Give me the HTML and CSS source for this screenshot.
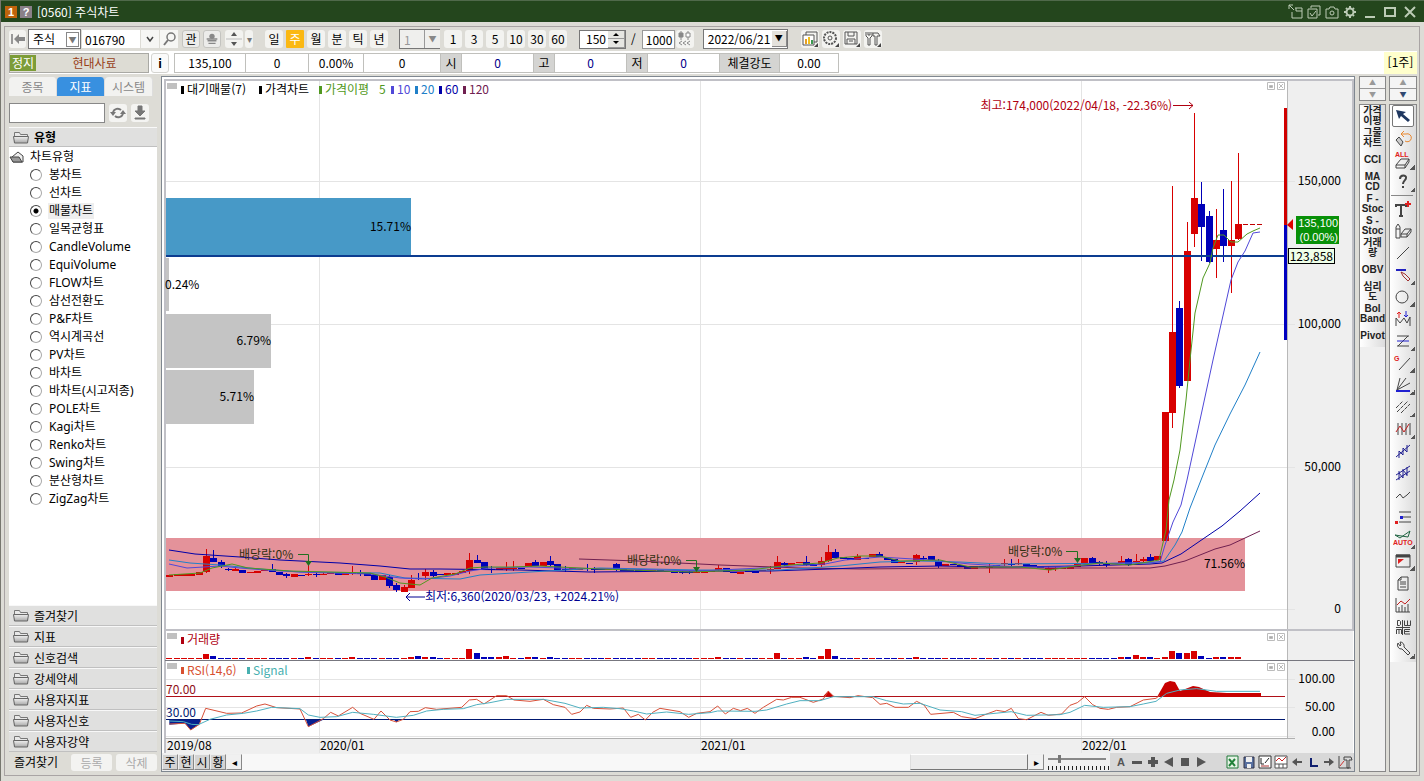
FILE: index.html
```html
<!DOCTYPE html>
<html lang="ko">
<head>
<meta charset="utf-8">
<title>[0560] 주식차트</title>
<link rel="stylesheet" href="styles.css">
</head>
<body>
<div class="window">
  <header class="titlebar">
    <span class="badge badge-num">1</span><span class="badge badge-help">?</span>
    <h1>[0560] 주식차트</h1>
    <div class="title-actions">
      <button aria-label="창 분리"><svg viewBox="0 0 16 16"><path d="M1 5V1h4M1 1l5 5M7 4h7v10H4V8M8 4v3h6"/></svg></button>
      <button aria-label="창 선택"><svg viewBox="0 0 16 16"><path d="M5 4V2h9v9h-2M2 5h9v9H2zM4 9l2 3 4-5"/></svg></button>
      <button aria-label="화면 캡처"><svg viewBox="0 0 16 16"><path d="M2 5h3l1-2h4l1 2h3v9H2z"/><circle cx="8" cy="9" r="2"/></svg></button>
      <button aria-label="설정"><svg viewBox="0 0 16 16"><circle cx="8" cy="8" r="3.5" stroke-width="2"/><path d="M8 2v2M8 12v2M2 8h2M12 8h2M4 4l1 1M11 11l1 1M12 4l-1 1M4 12l1-1" stroke-width="2"/></svg></button>
      <button class="win" aria-label="최소화"><svg viewBox="0 0 16 16"><path d="M3 13h10" stroke-width="2"/></svg></button>
      <button class="win" aria-label="최대화"><svg viewBox="0 0 16 16"><path d="M3 4h10v8H3z" stroke-width="2"/></svg></button>
      <button class="win" aria-label="닫기"><svg viewBox="0 0 16 16"><path d="M3 3l10 10M13 3L3 13" stroke-width="2"/></svg></button>
    </div>
  </header>

  <div class="frame">
    <div class="toolbar">
      <button class="tb narrow" aria-label="처음"><svg viewBox="0 0 18 18"><path d="M3 4v10" stroke="#999" stroke-width="2" fill="none"/><path d="M5 9l5-5v3h6v4h-6v3z" fill="#888"/></svg></button>
      <span class="combo kind"><select aria-label="종목 구분"><option>주식</option></select><i class="boxed">▼</i></span>
      <span class="code"><input aria-label="종목코드" value="016790"><button aria-label="종목 목록"><svg viewBox="0 0 18 18"><path d="M6 7l3 4 3-4" fill="none" stroke="#444" stroke-width="1.5"/></svg></button><button aria-label="종목 검색"><svg viewBox="0 0 18 18"><circle cx="11" cy="7" r="4" fill="none" stroke="#777" stroke-width="1.5"/><path d="M8 10l-4 5" stroke="#777" stroke-width="2"/></svg></button></span>
      <button class="tb gray">관</button>
      <button class="tb gray" aria-label="관심 저장"><svg viewBox="0 0 18 18"><circle cx="9" cy="6" r="3" fill="#888"/><path d="M3 9h12M4 11h10M5 14h8" stroke="#888" stroke-width="1.5"/></svg></button>
      <button class="tb" aria-label="순서 이동"><svg viewBox="0 0 18 18"><path d="M6 6l3-4 3 4zM6 12l3 4 3-4z" fill="#555"/><path d="M1 9h16" stroke="#bbb"/></svg></button>
      <button class="tb tiny" aria-label="더보기">▾</button>
      <div class="group periods">
        <button class="tb">일</button><button class="tb active">주</button><button class="tb">월</button><button class="tb">분</button><button class="tb">틱</button><button class="tb">년</button>
      </div>
      <span class="combo minute"><input aria-label="분 단위" value="1" disabled><i class="soft">▼</i></span>
      <div class="group minutes">
        <button class="tb">1</button><button class="tb">3</button><button class="tb">5</button><button class="tb">10</button><button class="tb">30</button><button class="tb">60</button>
      </div>
      <span class="spin"><input aria-label="표시 개수" value="150"><span class="arrows"><button aria-label="늘리기"><svg viewBox="0 0 8 4"><path d="M1 4l3-3 3 3z"/></svg></button><button aria-label="줄이기"><svg viewBox="0 0 8 4"><path d="M1 0l3 3 3-3z"/></svg></button></span></span>
      <span class="slash">/</span>
      <input class="total" aria-label="전체 개수" value="1000">
      <button class="tb" aria-label="과거 데이터"><svg viewBox="0 0 18 18" fill="none" stroke="#888"><path d="M5 1v9M12 1v9"/><path d="M3 3h4v4H3z" fill="#888"/><path d="M10 3h4v4h-4z" fill="#fff"/><path d="M6 11l-3 2 3 2M10 11l-3 2 3 2M14 11l-3 2 3 2"/></svg></button>
      <span class="combo date"><select aria-label="기준일"><option>2022/06/21</option></select><i class="raised">▼</i></span>
      <div class="group tools">
        <button class="tb" aria-label="차트 종류"><svg viewBox="0 0 18 18" fill="none" stroke="#555"><path d="M5 5V2h11v10h-3"/><path d="M2 5h11v10H2z" fill="#fff"/><path d="M5 9v5" stroke="#e8a020" stroke-width="2"/><path d="M8 7v7" stroke="#f0c020" stroke-width="2"/><path d="M11 10v4" stroke="#3a9a50" stroke-width="2"/><path d="M17 13v4h-4z" fill="#444" stroke="none"/></svg></button>
        <button class="tb" aria-label="환경 설정"><svg viewBox="0 0 18 18" fill="none" stroke="#555"><circle cx="8" cy="8" r="6" stroke-dasharray="2 1" stroke-width="2"/><circle cx="8" cy="8" r="2"/><path d="M17 13v4h-4z" fill="#444" stroke="none"/></svg></button>
        <button class="tb" aria-label="저장"><svg viewBox="0 0 18 18" fill="none" stroke="#555"><path d="M2 2h12v12H2zM5 2v4h6V2M4 14V9h8v5M6 11h4"/><path d="M17 13v4h-4z" fill="#444" stroke="none"/></svg></button>
        <button class="tb" aria-label="도구"><svg viewBox="0 0 18 18" fill="none" stroke="#555"><path d="M2 2v4l2 2v7h2V8l2-2V2M4 2v3h2V2M9 3h5l2 3h-3v9h-2V6H9z"/><path d="M17 13v4h-4z" fill="#444" stroke="none"/></svg></button>
      </div>
    </div>

    <div class="quote">
      <div class="name"><b>정지</b><span>현대사료</span></div>
      <button class="info">i</button>
      <div class="cells">
        <span class="c71">135,100</span><span class="c62">0</span><span class="c54">0.00%</span><span class="c77">0</span><em>시</em><span class="c72 navy">0</span><em>고</em><span class="c72 navy">0</span><em>저</em><span class="c72 navy">0</span><em class="wide">체결강도</em><span class="c58">0.00</span>
      </div>
      <span class="week">[1주]</span>
    </div>

    <main class="main">
      <aside class="sidebar">
        <nav class="tabs"><button>종목</button><button class="on">지표</button><button>시스템</button></nav>
        <div class="search">
          <input aria-label="지표 검색">
          <button aria-label="새로고침"><svg viewBox="0 0 18 18"><path d="M4 8a5 5 0 0 1 8-2M14 10a5 5 0 0 1-8 2" fill="none" stroke="#777" stroke-width="2"/><path d="M1 8h6l-3 4zM11 10h6l-3-4z" fill="#777"/></svg></button>
          <button aria-label="내려받기"><svg viewBox="0 0 18 18"><path d="M7 2h4v5h3l-5 5-5-5h3zM4 14h10v1H4z" fill="#777" stroke="#777"/></svg></button>
        </div>
        <h2 class="section head"><svg class="folder" viewBox="0 0 16 13"><use href="#fd"/></svg>유형</h2>
        <div class="tree">
          <p class="root"><svg class="folder" viewBox="0 0 16 13"><path d="M3 6l6-5 5 4v6H4z" fill="#eee" stroke="#444"/><path d="M1 6h9l3 5H4z" fill="#999" stroke="#444"/></svg>차트유형</p>
          <label><input type="radio" name="t"><span>봉차트</span></label>
          <label><input type="radio" name="t"><span>선차트</span></label>
          <label><input type="radio" name="t" checked><span>매물차트</span></label>
          <label><input type="radio" name="t"><span>일목균형표</span></label>
          <label><input type="radio" name="t"><span>CandleVolume</span></label>
          <label><input type="radio" name="t"><span>EquiVolume</span></label>
          <label><input type="radio" name="t"><span>FLOW차트</span></label>
          <label><input type="radio" name="t"><span>삼선전환도</span></label>
          <label><input type="radio" name="t"><span>P&amp;F차트</span></label>
          <label><input type="radio" name="t"><span>역시계곡선</span></label>
          <label><input type="radio" name="t"><span>PV차트</span></label>
          <label><input type="radio" name="t"><span>바차트</span></label>
          <label><input type="radio" name="t"><span>바차트(시고저종)</span></label>
          <label><input type="radio" name="t"><span>POLE차트</span></label>
          <label><input type="radio" name="t"><span>Kagi차트</span></label>
          <label><input type="radio" name="t"><span>Renko차트</span></label>
          <label><input type="radio" name="t"><span>Swing차트</span></label>
          <label><input type="radio" name="t"><span>분산형차트</span></label>
          <label><input type="radio" name="t"><span>ZigZag차트</span></label>
        </div>
        <button class="section"><svg class="folder" viewBox="0 0 16 13"><use href="#fd"/></svg>즐겨찾기</button>
        <button class="section"><svg class="folder" viewBox="0 0 16 13"><use href="#fd"/></svg>지표</button>
        <button class="section"><svg class="folder" viewBox="0 0 16 13"><use href="#fd"/></svg>신호검색</button>
        <button class="section"><svg class="folder" viewBox="0 0 16 13"><use href="#fd"/></svg>강세약세</button>
        <button class="section"><svg class="folder" viewBox="0 0 16 13"><use href="#fd"/></svg>사용자지표</button>
        <button class="section"><svg class="folder" viewBox="0 0 16 13"><use href="#fd"/></svg>사용자신호</button>
        <button class="section"><svg class="folder" viewBox="0 0 16 13"><use href="#fd"/></svg>사용자강약</button>
        <div class="fav"><span>즐겨찾기</span><button disabled>등록</button><button disabled>삭제</button></div>
      </aside>

      <section class="chart">
        <svg class="plot" viewBox="162 77 1192 676" preserveAspectRatio="xMinYMin meet" role="img" aria-label="현대사료 주봉 차트">
          <defs>
            <linearGradient id="fg" x2="0" y2="1"><stop offset="0" stop-color="#f0f0f0"/><stop offset="1" stop-color="#a8a8a8"/></linearGradient>
            <g id="fd"><path d="M1.500 11V1.500h5l1 2h7V11z" fill="#e8e8e8" stroke="#777"/><path d="M.5 5.500h15l-1 6.500h-13z" fill="url(#fg)" stroke="#666"/></g>
            <g id="paneBtns" fill="none" stroke="#bbb"><path d="M.5.5h7v7h-7zM10.500.5h7v7h-7zM12 2l4 4M16 2l-4 4"/><path d="M2.500 3.500h3v2h-3z" fill="#aaa"/></g>
          </defs>
          <rect x="162" y="77" width="1192" height="676" fill="#fff"/>
          <path d="M1287 81h66v672h-66zM165 739h1188v14H165z" fill="#efefef"/>
          <g class="crisp" fill="none">
            <path d="M166 181.500h1129M166 324.500h1129M166 467.500h1129M166 609.500h1129M166 679.500h1129M166 707.500h1129M166 736.500h1129M319.500 81v672M700.500 81v672M1081.500 81v672" stroke="#e4e4e4"/>
            <path d="M1287.500 81v658" stroke="#b8b8b8"/>
            <path d="M165 753V80h1188v550H165" stroke="#c0c0c6" stroke-width="2"/>
            <path d="M165 660.500h1189" stroke="#77777f"/>
            <path d="M165 738.500h1130" stroke="#b0b0b0"/>
          </g>

          <rect x="166" y="198" width="245" height="57" fill="#4799c7"/>
          <path d="M166 258h3v53h-3zM166 314h105v54H166zM166 370h88v54h-88z" fill="#c4c4c4"/>
          <rect x="166" y="538" width="1079" height="53" fill="#e4929a"/>

          <g id="candles" class="crisp"></g>
          <rect x="166" y="255" width="1121" height="2" fill="#0c3c90"/>

          <g class="line">
            <polyline stroke="#702050" points="579,559 638,561 720,565 800,568 860,569 960,568 1000,568 1150,568 1165,566 1185,561 1215,549 1230,545 1245,538 1260,531"/>
            <polyline stroke="#0000a8" points="169,550 195,554 240,557 280,560 340,563 380,566 410,569 440,569 520,570 590,572 700,571 770,571 830,569 880,567 940,566 1000,567 1080,566 1150,564 1162,563 1181,554 1200,541 1222,526 1240,511 1260,493"/>
            <polyline stroke="#2080c8" points="169,560 190,563 220,565 260,569 300,572 380,573 405,578 460,579 480,575 530,572 600,568 700,570 780,570 840,566 880,562 920,561 960,562 1000,564 1150,563 1164,561 1175,545 1182,532 1190,508 1203,475 1215,445 1230,414 1245,385 1260,352"/>
            <polyline stroke="#5048d8" points="169,564 187,568 220,566 240,568 265,570 300,572 330,573 370,574 400,578 425,579 450,576 470,571 490,568 530,567 560,568 620,569 700,571 780,567 825,564 845,560 880,557 930,560 970,564 1020,567 1060,567 1090,564 1160,562 1165,545 1173,522 1181,505 1187,480 1200,420 1213,360 1231,280 1238,262 1245,251 1253,233 1260,232"/>
            <polyline stroke="#509820" points="169,575 200,573 212,568 232,564 248,568 290,571 330,572 370,573 385,577 400,583 420,585 432,578 455,574 470,568 485,567 510,567 540,566 560,567 600,569 690,572 750,570 790,565 820,563 838,558 860,556 880,556 900,561 940,560 970,567 1020,567 1050,570 1075,566 1100,563 1130,565 1159,560 1166,530 1169,500 1174,480 1180,450 1186,400 1190,360 1195,313 1203,278 1210,263 1213,248 1218,235 1224,235 1231,242 1238,242 1247,234 1253,231 1260,228"/>
            <path stroke="#c00000" stroke-dasharray="5 2" d="M1243 224.500h21"/>
          </g>

          <path d="M1284 108h3v117h-3z" fill="#d00000"/><path d="M1284 225h3v115h-3z" fill="#0000c0"/>
          <path d="M1293 219v11l-6-5z" fill="#e00000"/>
          <g class="line">
            <path stroke="#b00010" d="M1173 105.500h20M1189 102l4 3.500-4 3.500"/>
            <path stroke="#000090" d="M425 597h-19M410 593l-4 4 4 4"/>
            <path stroke="#207020" d="M298 554.500h10.500V565M686 560.500h10.500V570M1066 551.500h11.500V562"/>
          </g>
          <path d="M305 561h7l-3.500 5zM693 567h7l-3.500 5zM1074 558h7l-3.500 5z" fill="#207020"/>

          <g id="volume" class="crisp"></g>

          <g class="crisp"><path d="M166 696.500h1119" stroke="#b01018"/><path d="M166 719.500h1119" stroke="#001870"/></g>
          <g transform="translate(160 530) scale(.33333)">
            <path fill="#082090" d="M28 569v15l27-2 20-2 17 20 26-17 4-14zM438 569l7 21 45-21zM702 569l7 8 9-8z"/>
            <path fill="#c80000" d="M1990 499l15-17 17 17z"/>
          </g>
          <path fill="#c80000" d="M1157 697l8-14 5-2 5 1 5 9 13-5 6 1 11 5 17 1h34v4z"/>
          <g class="line" transform="translate(160 530) scale(.33333)">
            <polyline stroke="#d85038" points="28,582 75,580 92,600 118,583 137,535 200,550 245,549 290,528 315,522 350,533 420,537 445,590 490,566 512,547 535,558 578,532 600,550 642,568 663,543 690,570 709,576 730,568 750,545 775,544 796,533 830,538 905,532 928,510 950,508 972,522 1010,497 1040,497 1062,510 1110,514 1150,508 1180,524 1215,532 1235,553 1260,546 1280,526 1300,535 1350,537 1390,534 1412,562 1435,553 1456,570 1478,547 1500,535 1560,545 1586,562 1610,550 1650,545 1673,528 1696,552 1720,535 1742,542 1762,535 1785,550 1810,532 1850,508 1870,510 1895,502 1920,502 1960,517 1990,507 2005,484 2020,499 2070,503 2094,497 2138,503 2160,523 2180,520 2205,532 2245,532 2270,514 2292,525 2312,553 2380,547 2405,560 2445,566 2475,554 2510,541 2535,545 2554,535 2575,566 2600,569 2643,547 2665,556 2705,552 2730,526 2752,518 2774,500 2798,524 2820,535 2845,538 2870,532 2910,530 2950,510 2988,505 3000,495"/>
            <polyline stroke="#50b0c0" points="28,573 70,575 95,583 115,584 150,568 200,555 250,550 290,543 335,532 420,536 445,555 480,562 530,560 578,547 640,553 709,562 760,556 800,543 850,538 910,536 950,524 990,518 1040,508 1150,508 1215,520 1260,534 1330,532 1380,536 1420,543 1460,552 1520,546 1586,553 1650,548 1673,543 1785,544 1820,540 1880,522 1920,512 1980,512 2020,500 2138,500 2180,512 2230,522 2280,520 2340,540 2405,545 2445,556 2554,545 2600,556 2700,554 2730,547 2774,526 2830,532 2910,530 2950,522 2988,514 3020,490 3060,480 3110,476 3170,484 3300,484"/>
          </g>

          <g fill="#c0c0c0"><path d="M167 83h10v6h-10zM167 633h10v6h-10zM167 663h10v6h-10z"/></g>
          <use href="#paneBtns" x="1267" y="82"/><use href="#paneBtns" x="1267" y="633"/><use href="#paneBtns" x="1267" y="663"/>

          <g class="txt">
            <path d="M181 86h3v8h-3zM259 86h3v8h-3z" fill="#000"/><path d="M319 86h3v8h-3z" fill="#509820"/><path d="M391 86h3v8h-3z" fill="#5048d8"/><path d="M415 86h3v8h-3z" fill="#2080c8"/><path d="M439 86h3v8h-3z" fill="#0000a8"/><path d="M463 86h3v8h-3z" fill="#702050"/>
            <text x="187" y="94">대기매물(7)</text><text x="265" y="94">가격차트</text><text x="325" y="94" fill="#509820">가격이평</text><text x="379" y="94" fill="#509820">5</text><text x="397" y="94" fill="#5048d8">10</text><text x="421" y="94" fill="#2080c8">20</text><text x="445" y="94" fill="#0000a8">60</text><text x="469" y="94" fill="#702050">120</text>
            <text x="1172" y="110" text-anchor="end" fill="#b00010">최고:174,000(2022/04/18, -22.36%)</text>
            <text x="425" y="601" fill="#000090">최저:6,360(2020/03/23, +2024.21%)</text>
            <text x="239" y="559" fill="#303010">배당락:0%</text><text x="627" y="565" fill="#303010">배당락:0%</text><text x="1008" y="556" fill="#303010">배당락:0%</text>
            <text x="165" y="289">0.24%</text>
            <g text-anchor="end"><text x="411" y="231">15.71%</text><text x="271" y="345">6.79%</text><text x="254" y="401">5.71%</text><text x="1245" y="568">71.56%</text>
            <text x="1341" y="185">150,000</text><text x="1341" y="328">100,000</text><text x="1341" y="471">50,000</text><text x="1341" y="613">0</text><text x="1335" y="683">100.00</text><text x="1335" y="711">50.00</text><text x="1335" y="736">0.00</text></g>
            <rect x="1296" y="216" width="43" height="28" fill="#089008"/>
            <g class="price" text-anchor="end" fill="#fff"><text x="1338" y="227">135,100</text><text x="1338" y="241">(0.00%)</text></g>
            <rect x="1288.500" y="248.500" width="46" height="15" fill="#efffe8" stroke="#000"/><text x="1333" y="261" text-anchor="end">123,858</text>
            <path d="M181 637h3v7h-3z" fill="#b00010"/><text x="187" y="644" fill="#b00010">거래량</text>
            <path d="M181 667h3v7h-3z" fill="#d85030"/><text x="187" y="675" fill="#d85030">RSI(14,6)</text>
            <path d="M247 667h3v7h-3z" fill="#48b0b0"/><text x="253" y="675" fill="#48b0b0">Signal</text>
            <text x="166" y="694" fill="#901018">70.00</text><text x="166" y="717" fill="#001870">30.00</text>
            <text x="167" y="750">2019/08</text><text x="320" y="750">2020/01</text><text x="701" y="750">2021/01</text><text x="1082" y="750">2022/01</text>
          </g>
        </svg>

        <div class="chartbar">
          <button class="mini">주</button><button class="mini">현</button><button class="mini">시</button><button class="mini">황</button><button class="mini arrow" aria-label="왼쪽으로">◂</button>
          <div class="track"><span class="thumb"></span></div>
          <button class="mini arrow" aria-label="오른쪽으로">▸</button>
          <div class="zoomer"><input type="range" aria-label="확대 비율" value="18"></div>
          <div class="play">
            <button>A</button>
            <button aria-label="축소"><svg viewBox="0 0 16 16"><path d="M3 7h10v3H3z"/></svg></button>
            <button aria-label="확대"><svg viewBox="0 0 16 16"><path d="M3 6h3V3h4v3h3v4h-3v3H6v-3H3z"/></svg></button>
            <button aria-label="뒤로"><svg viewBox="0 0 16 16"><path d="M12 3v10L3 8z"/></svg></button>
            <button aria-label="정지"><svg viewBox="0 0 16 16"><path d="M4 4h8v8H4z"/></svg></button>
            <button aria-label="재생"><svg viewBox="0 0 16 16"><path d="M4 3v10l9-5z"/></svg></button>
          </div>
          <div class="files">
            <button aria-label="엑셀"><svg viewBox="0 0 16 16"><path d="M2 2h11v12H2z" fill="#e8f4e8" stroke="#207838"/><path d="M4 5l6 7M10 5l-6 7" stroke="#208038" stroke-width="2"/></svg></button>
            <button aria-label="저장"><svg viewBox="0 0 16 16"><path d="M3 3h10v11H3z" fill="#5870a0" stroke="#334"/><path d="M5 3h6v5H5zM6 10h4v4H6z" fill="#eee"/></svg></button>
            <button aria-label="차트 전환"><svg viewBox="0 0 16 16"><path d="M2 2h12v12H2z" fill="#fff" stroke="#333"/><path d="M4 4v6h3M8 9l4-5" fill="none" stroke="#222"/><path d="M4 12h8" stroke="#a33"/></svg></button>
            <button aria-label="보조 차트"><svg viewBox="0 0 16 16"><path d="M2 2h12v12H2zM2 10h12M6 10v4M10 10v4" fill="#fff" stroke="#555"/><path d="M3 7l3-3 3 3 4-4" fill="none" stroke="#c22"/></svg></button>
            <button aria-label="이전"><svg viewBox="0 0 16 16"><path d="M3 8l5-4v3h5v2H8v3z"/></svg></button>
            <button aria-label="로그"><svg viewBox="0 0 16 16"><path d="M5 4h2v7h6v2H5z" fill="#102070"/></svg></button>
            <button aria-label="다음"><svg viewBox="0 0 16 16"><path d="M13 8L8 4v3H3v2h5v3z"/></svg></button>
            <button aria-label="차트 도구"><svg viewBox="0 0 16 16" fill="none" stroke="#444"><path d="M2 2v12h12M7 3h7l1 3h-3v8h-2V6H7z"/><path d="M3 12l4-5" stroke="#c33"/></svg></button>
          </div>
        </div>
      </section>

      <div class="rail">
        <div class="updown"><button aria-label="위로">▲</button><button aria-label="아래로">▼</button></div>
        <div class="rail-box"><div class="rail-items">
          <button>가격<br>이평</button><button>그물<br>차트</button><button>CCI</button><button>MA<br>CD</button><button>F -<br>Stoc</button><button>S -<br>Stoc</button><button>거래<br>량</button><button>OBV</button><button>심리<br>도</button><button>Bol<br>Band</button><button>Pivot</button>
        </div></div>
      </div>

      <div class="rail draw">
        <div class="updown"><button aria-label="위로">▲</button><button class="dark" aria-label="아래로">▼</button></div>
        <div class="rail-box"><div class="rail-items">
          <button class="picked" aria-label="선택"><svg viewBox="0 0 20 20"><path d="M3 4l10 2-3 2 7 6-2 2-7-6-2 3z" fill="#203860" stroke="none"/></svg></button>
          <button aria-label="되돌리기"><svg viewBox="0 0 20 20"><path d="M8 6l3-3M8 6l3 3M8 6h5a4 4 0 1 1-1 7" stroke="#e88830"/><path d="M3 12l3-3 4 5-2 4z" fill="#ccc"/></svg></button>
          <button class="more" aria-label="모두 지우기"><svg viewBox="0 0 20 20"><text x="2" y="7">ALL</text><path d="M3 15l5-6h8l-4 6zM3 15v3h9v-3M12 18l4-6V9"/></svg></button>
          <button class="more" aria-label="도움말"><svg viewBox="0 0 20 20"><path d="M7 7c0-5 7-4 6-1 0 2-3 3-3 6M10 14v2" stroke-width="2"/></svg></button>
          <hr>
          <button aria-label="글자"><svg viewBox="0 0 20 20"><path d="M3 8V6h10v2M8 6v11M6 17h4" stroke-width="2"/><path d="M15 2v6M12 5h6" stroke="#e02020" stroke-width="2"/></svg></button>
          <button aria-label="연필과 지우개"><svg viewBox="0 0 20 20"><path d="M3 6l2-3 2 3v11H3zM3 8h4M8 13l4-5h6l-4 5zM8 13v3h6v-3M14 16l4-5V8"/></svg></button>
          <button aria-label="직선"><svg viewBox="0 0 20 20"><path d="M4 16L16 4"/></svg></button>
          <button class="more" aria-label="수평선"><svg viewBox="0 0 20 20"><path d="M3 5h10" stroke="#2020c0" stroke-width="2"/><path d="M8 7l2 4 5 5 2-2-5-5z" stroke="#a03030"/></svg></button>
          <button class="more" aria-label="원"><svg viewBox="0 0 20 20"><circle cx="9" cy="10" r="6"/></svg></button>
          <button aria-label="고저점"><svg viewBox="0 0 20 20"><path d="M3 17V9l4 5 4-5 3 5 3-6v9"/><path d="M6 9V3M4 5l2-2 2 2" stroke="#e02020"/><path d="M13 2v6M11 6l2 2 2-2" stroke="#2020d0"/></svg></button>
          <button class="more" aria-label="되돌림"><svg viewBox="0 0 20 20"><path d="M4 5h12M4 15h12M15 5L5 15"/><path d="M4 10h12" stroke="#2020d0"/></svg></button>
          <button class="more" aria-label="각도선"><svg viewBox="0 0 20 20"><text x="1" y="8">G</text><path d="M6 17L17 5"/></svg></button>
          <button class="more" aria-label="부채꼴"><svg viewBox="0 0 20 20"><path d="M4 15L7 3M4 15L13 3M4 15l13-7"/><path d="M3 16h14" stroke="#2020d0" stroke-width="2"/></svg></button>
          <button class="more" aria-label="평행선"><svg viewBox="0 0 20 20"><path d="M3 11l7-7M4 15L15 4M8 16l9-9" stroke-dasharray="4 1"/></svg></button>
          <button class="more" aria-label="시간대"><svg viewBox="0 0 20 20"><path d="M5 4v12M9 4v12M13 4v12M17 4v12"/><path d="M3 13l4-6 4 6 5-8" stroke="#c02020"/></svg></button>
          <button aria-label="추세선"><svg viewBox="0 0 20 20"><path d="M3 16L17 4M6 10v7M10 7v7M14 4v7M6 10l4 4M10 7l4 4" stroke="#202090"/></svg></button>
          <button aria-label="추세대"><svg viewBox="0 0 20 20"><path d="M3 12L17 3M3 17L17 8M6 8v9M10 6v9M14 4v9M6 10l4 5M10 7l4 5" stroke="#202090"/></svg></button>
          <button aria-label="파동"><svg viewBox="0 0 20 20"><path d="M3 13l4-4 3 4 4-3 3-3"/></svg></button>
          <button aria-label="지지선"><svg viewBox="0 0 20 20"><path d="M6 5h12M9 10h9M6 15h12"/><path d="M7 9h3v3H7z" fill="#2020d0" stroke="none"/><path d="M2 14h3v3H2z" fill="#e02020" stroke="none"/></svg></button>
          <button class="more" aria-label="자동 추세선"><svg viewBox="0 0 20 20"><path d="M2 6l5 3 10-7-2 6z" stroke="#264"/><text x="0" y="16">AUTO</text></svg></button>
          <button class="more" aria-label="창"><svg viewBox="0 0 20 20"><path d="M3 4h14v12H3z"/><path d="M3 5h14" stroke-width="3"/><path d="M5 8h6l-6 5z" fill="#e02020" stroke="none"/></svg></button>
          <button aria-label="문서"><svg viewBox="0 0 20 20"><path d="M8 4h7v13H5V7zM8 4v3H5M7 9h6M7 11h6M7 14h6"/></svg></button>
          <button aria-label="통계"><svg viewBox="0 0 20 20"><path d="M3 3v14h14M6 12v5M9 10v7M12 12v5M15 9v8"/><path d="M4 10l4-4 4 3 5-5" stroke="#c02020"/></svg></button>
          <button aria-label="주기"><svg viewBox="0 0 20 20"><path d="M4.500 3.500v5h2l1-1v-3l-1-1zM11.500 3.500v5h6v-5M14.500 3.500v5M3.500 17v-4.500h5V17M6 12.500V17M17 12.500h-5.500v4.500H17M11.500 14.500h5M9.500 3v15M3 10.500h14"/></svg></button>
          <button class="more" aria-label="도구 설정"><svg viewBox="0 0 20 20"><path d="M5 4a4 4 0 0 0 4 6l6 6 2-2-6-6a4 4 0 0 0-4-5l1 3-1 1z"/></svg></button>
        </div></div>
      </div>
    </main>
  </div>
</div>
<script src="chart.js"></script>
</body>
</html>
```

FILE: styles.css
```css
* { box-sizing: border-box; }
body { margin: 0; font: 12px/16px "Noto Sans CJK KR", sans-serif; color: #000; }
button, input, select { font: inherit; color: inherit; margin: 0; padding: 0; border: 0; background: none; border-radius: 0; min-width: 0; }
button svg { display: block; }
i, em { font-style: normal; }

.window { min-height: 100vh; display: flex; flex-direction: column; background: #dddcd6; border-left: 1px solid #77776f; padding-left: 0; }
.titlebar { display: flex; align-items: center; height: 22px; padding: 0 6px 0 4px; background: #24461d; border-top: 1px solid #50694b; color: #fff; }
.titlebar h1 { flex: 1; margin: 0 0 0 5px; font-size: 12px; font-weight: 400; }
.badge { width: 12px; height: 12px; margin-right: 3px; background: #c0640c; font: bold 11px/12px "Liberation Sans", sans-serif; text-align: center; }
.badge-help { background: #8a8088; margin-right: 0; }
.title-actions { display: flex; gap: 2px; }
.title-actions svg { width: 16px; height: 16px; fill: none; stroke: #bccbb6; }
.title-actions .win { margin-left: 2px; }

.frame { flex: 1; display: flex; flex-direction: column; margin: 4px 4px 5px 3px; padding: 0 2px 3px 4px; border: 1px solid #a9a4a4; }

.toolbar { display: flex; align-items: center; height: 24px; }
.toolbar svg { width: 18px; height: 18px; }
.tb { width: 18px; height: 18px; border-radius: 3px; background: #f3f3f0; text-align: center; line-height: 18px; flex: none; }
.tb.narrow { width: 17px; margin-right: 2px; }
.tb.gray { background: #ececea; border: 1px solid #c4c4c0; margin-left: 3px; line-height: 16px; }
.tb.gray svg { width: 16px; height: 16px; }
.tb.gray + .tb:not(.gray) { margin-left: 4px; }
.tb.tiny { width: 8px; margin-left: 2px; color: #777; font-size: 10px; }
.tb.active { background: #fbb812; color: #fff; border-radius: 1px; }
.group { display: flex; gap: 3px; }
.periods { margin-left: 12px; }
.minutes { margin-left: 4px; }
.tools { margin-left: 13px; }
.combo { display: flex; align-items: center; height: 20px; background: #fff; border: 1px solid #777; }
.combo select, .combo input { flex: 1; width: 100%; appearance: none; padding-left: 4px; height: 18px; }
.combo i { pointer-events: none; font-size: 8px; line-height: 14px; text-align: center; }
.kind { width: 53px; margin-right: 1px; }
.boxed { width: 13px; height: 15px; margin-right: 1px; border: 1px solid #888; color: #777; }
.code { display: flex; gap: 1px; margin-right: 1px; }
.code input { width: 58px; height: 18px; padding-left: 3px; background: #fff; }
.code button { width: 18px; height: 18px; background: #f6f6f4; }
.minute { width: 41px; margin-left: 11px; color: #999; border-right: 0; background: #efefed; }
.minute input { border-right: 1px solid #999; }
.soft { width: 15px; color: #888; }
.spin { display: flex; width: 47px; height: 19px; margin-left: 12px; background: #fff; border: 1px solid #777; }
.spin input { flex: 1; width: 100%; text-align: right; }
.arrows { display: flex; flex-direction: column; width: 17px; margin-left: 2px; }
.arrows button { flex: 1; display: flex; align-items: center; justify-content: center; background: #e6e6e2; border: 1px solid #999; border-width: 0 1px 1px 0; }
.arrows svg { width: 8px; height: 4px; }
.slash { margin: 0 6px 0 5px; }
.total { width: 33px; height: 19px; padding-left: 3px; margin-right: 1px; background: #fff; border: 1px solid #999; }
.date { width: 85px; margin-left: 9px; }
.raised { width: 15px; height: 16px; background: #e4e2dc; border: 1px solid #888; border-width: 0 1px 1px 0; }

.quote { display: flex; align-items: center; height: 23px; margin-bottom: 2px; background: #fff; }
.name { display: flex; align-items: center; width: 140px; height: 20px; background: #dddcd4; border: 1px solid #a9a9a4; color: #984018; }
.name b { width: 26px; height: 16px; font-weight: 400; color: #fff; background: #7c9c38; text-align: center; }
.name span { flex: 1; padding-left: 5px; text-align: center; }
.info { width: 18px; height: 20px; margin: 0 5px 0 2px; border: 1px solid #d4d4d0; border-radius: 3px; background: #fafafa; font-weight: 700; }
.cells { display: flex; border: 1px solid #c0c0bc; border-right: 0; }
.cells span, .cells em { height: 18px; line-height: 18px; text-align: center; border-right: 1px solid #c0c0bc; }
.cells em { width: 21px; background: #d4d4d2; }
.cells .wide { width: 60px; }
.c71 { width: 71px; } .c62 { width: 63px; } .c54 { width: 55px; } .c77 { width: 77px; } .c72 { width: 72px; } .c58 { width: 59px; }
.navy { color: #000088; }
.week { margin-left: auto; width: 33px; height: 22px; line-height: 20px; text-align: center; background: #ffffcc; }

.main { flex: 1; display: flex; min-height: 0; }
.sidebar { width: 148px; margin-right: 4px; display: flex; flex-direction: column; }
.tabs { display: flex; height: 19px; margin: 1px 4px 0 0; }
.tabs button { flex: 1; background: #f2f2f0; color: #888; border-radius: 4px 4px 0 0; border-right: 1px solid #ddd; line-height: 17px; }
.tabs .on { background: #3890e0; color: #fff; }
.search { display: flex; gap: 4px; margin: 7px 0 4px; }
.search input { width: 96px; height: 20px; background: #fff; border: 1px solid #888; }
.search button { width: 18px; height: 18px; margin-top: 1px; background: #f4f4f2; border-radius: 3px; }
.search svg { width: 18px; height: 18px; }
.section { display: flex; align-items: center; flex: none; height: 21px; margin: 0; padding-left: 4px; background: #e0e0df; border-top: 1px solid #f8f8f8; border-bottom: 1px solid #c0c0c0; text-align: left; }
.section.head { height: 20px; font-size: 12px; font-weight: 700; }
.folder { width: 16px; height: 13px; margin-right: 5px; flex: none; }
.tree { flex: 1; padding-top: 1px; background: #fff; font-family: "Noto Sans", "Noto Sans CJK KR", sans-serif; }
.root { display: flex; align-items: center; height: 18px; margin: 0; }
.tree label { display: flex; align-items: center; height: 18px; padding-left: 21px; }
.tree span { margin-left: 6px; line-height: 16px; padding: 0 1px; }
.tree input { appearance: none; width: 12px; height: 12px; border: 1px solid #444; border-right-color: #aaa; border-bottom-color: #aaa; border-radius: 50%; background: #fff; }
.tree input:checked { background: radial-gradient(circle, #000 0 2px, #fff 3px); }
.tree input:checked + span { background: #eee; }
.fav { display: flex; align-items: center; height: 20px; padding-left: 5px; gap: 4px; }
.fav span { flex: 1; }
.fav button { width: 41px; height: 17px; border-radius: 3px; background: #f3f3f1; color: #aaa; line-height: 17px; }

.chart { flex: 1; min-width: 0; display: flex; flex-direction: column; border: 1px solid #7f8790; background: #fff; }
.plot { display: block; width: 100%; flex: 1; min-height: 0; }
.crisp { shape-rendering: crispEdges; }
.line { fill: none; }
.line * { vector-effect: non-scaling-stroke; }
.txt text { font-size: 12px; }
.txt .price text { font: 11px "Liberation Sans", sans-serif; }
.up { fill: #d80000; }
.down { fill: #0000b8; }

.chartbar { display: flex; align-items: center; height: 18px; background: #f0f0f0; }
.mini { width: 16px; height: 16px; line-height: 14px; background: #d4d4d4; border: 1px solid #888; border-left-color: #eee; border-top-color: #eee; }
.arrow { background: #f0f0f0; font-size: 10px; }
.track { flex: 1; display: flex; justify-content: flex-end; height: 16px; background: #f8f8f8; }
.thumb { width: 118px; background: #ebebeb; border: 1px solid #777; border-left-color: #ddd; border-top-color: #fff; }
.zoomer { width: 62px; height: 16px; margin: 0 0 0 4px; padding-top: 1px; background: repeating-linear-gradient(90deg, #222 0 1px, transparent 1px 4px) bottom / 100% 4px no-repeat; }
.zoomer input { appearance: none; display: block; width: 58px; height: 8px; background: linear-gradient(#888, #888) center / 100% 2px no-repeat; }
.zoomer input::-webkit-slider-thumb { appearance: none; width: 3px; height: 8px; background: #777; }
.play, .files { display: flex; height: 18px; align-items: center; background: #d8d8d8; }
.play { padding-left: 3px; }
.files { padding: 0 1px 0 16px; }
.chartbar svg { width: 16px; height: 16px; fill: #555; }
.play button, .files button { width: 16px; font: bold 11px/16px "Liberation Sans", sans-serif; color: #555; }
.files [aria-label="차트 도구"] svg { fill: none; }

.rail { width: 27px; margin-left: 4px; display: flex; flex-direction: column; }
.rail.draw { width: 28px; margin-left: 3px; }
.updown { display: flex; flex-direction: column; height: 25px; margin-bottom: 3px; border: 1px solid #888; background: #f4f4f4; }
.updown button { flex: 1; font-size: 7px; line-height: 11px; color: #999; }
.updown button + button { border-top: 1px solid #999; }
.updown .dark { color: #304870; }
.rail-box { flex: 1; border: 1px solid #888; background: #efefef; }
.rail-items { display: flex; flex-direction: column; background: linear-gradient(90deg, #fff, #dcdcdc); }
.rail-items button { height: 22px; font: bold 10px/10px "Liberation Sans", "Noto Sans CJK KR", sans-serif; color: #222; }
.rail-items hr { width: 22px; margin: 2px 1px; border: 0; border-top: 1px solid #888; height: 0; flex: none; }
.draw .rail-items { padding-bottom: 2px; }
.draw .rail-items button { padding-left: 3px; }
.rail-items svg { width: 20px; height: 20px; fill: none; stroke: #444; }
.rail-items text { fill: #e02020; stroke: none; font: bold 7px "Liberation Sans", sans-serif; }
.rail-items .more { background: linear-gradient(135deg, transparent 50%, #555 50%) 20px 16px / 5px 5px no-repeat; }
.draw .rail-items .picked { background: #fff; border: 1px solid #777; border-radius: 2px; margin: 0 2px; padding-left: 0; }
```

FILE: chart.js
```js
// Weekly candles: direction, body top, body height, wick top, wick bottom (plot units).
const rows = `u575 2|u574 2|u574 2|u574 2|u572 3|u556 16 549 573|d558 4 550 562|d562 4 560 568|d569 1 568 571|u569 2 567 571|
d570 3|u572 1|u571 2|u570 1|d569 3 564 572|d572 3|d574 2 573 578|u574 3|d575 1|u574 1 562 576|d574 1 572 577|u574 1 572 575|
u572 2|d572 3|u573 2|u572 2 566 575|d573 1 570 576|d573 3|d575 5|u575 5|d577 9 575 588|d585 5 583 592|u587 5 585 592|
u580 8 575 588|d578 1 573 580|u572 4 569 580|d572 4 570 577|d574 1|u573 2|u573 2|u571 2|u560 11 553 574|d560 3 555 563|
d562 7|d569 1 566 573|u568 2|u568 1 562 571|u568 1 561 571|d568 1|u563 4|d562 4 560 566|u562 4|d561 4 556 567|d564 6|
d569 1 566 572|u568 2|u569 1|d568 1 564 571|d569 1 567 573|d569 1|u569 1|d564 5 563 571|d569 2|d570 1|d570 2|u570 1|u570 1|
d570 1|d571 1|d571 2|d572 1 571 574|d572 1 571 574|u572 1|u572 1|u571 1|u568 2 565 571|d568 4|d572 1|u572 2|d571 1|d571 2|
u570 1|u569 1 566 574|u562 7 556 569|d563 2 562 566|u563 2|u562 1|d562 3 556 566|d564 2|u561 4 557 567|
u552 9 545 562|d552 6 549 558|d557 2|d558 2|u556 4 554 560|d558 1|u554 3|d554 3 552 557|d558 2|d559 4|u561 2|d563 1|
u555 7 554 565|d558 1 556 561|d556 4|d561 5 559 568|u564 2|d564 1|d565 2|d566 3|u566 3|d566 1|u567 1 564 573|d565 1|
u563 1 559 566|d564 1 559 566|u563 1 559 565|d564 2|d565 1|d566 2|u568 2 566 573|u568 1 567 571|u568 1|u567 2|u563 4|
u558 6|d558 5 557 563|d562 1 561 566|d563 2 561 567|d563 1|u561 2 556 563|d559 6 558 566|u561 1 554 563|u559 2 557 563|
d557 4 554 561|u556 4|u412 129 412 541|u332 81 186 428|d308 78 301 388|u251 130 222 381|u198 36 113 247|d204 23 182 261|
d216 46 211 263|u240 9 209 278|d230 16 189 262|u240 6 181 293|u224 15 153 240`.replace(/\n/g, "").split("|");

const volumes = {5: 5, 6: 3, 19: 2, 25: 2, 33: 2, 34: 3, 35: 2, 36: 2, 41: 10, 42: 6, 43: 2, 44: 2, 45: 2, 46: 3, 49: 2, 50: 2, 52: 2,
  75: 2, 83: 6, 87: 2, 89: 3, 90: 10, 91: 3, 102: 2, 130: 2, 131: 2, 132: 4, 133: 2, 134: 2, 136: 2, 137: 8, 138: 6, 139: 6, 140: 8, 141: 3, 143: 2, 144: 2, 145: 2, 146: 2};

let candles = "";
let bars = "";
const last = rows.length - 1;
rows.forEach((row, i) => {
  const cls = row[0] === "u" ? "up" : "down";
  const [top, height, high, low] = row.slice(1).split(" ").map(Number);
  const x = Math.round(1238 - (last - i) * 7.32);
  candles += `<rect class="${cls}" x="${x - 3}" y="${top}" width="7" height="${height}"/>`;
  if (high) candles += `<rect class="${cls}" x="${x}" y="${high}" width="1" height="${low - high}"/>`;
  const v = volumes[i] || 1;
  bars += `<rect class="${cls}" x="${x - 3}" y="${659 - v}" width="6" height="${v}"/>`;
});
document.getElementById("candles").innerHTML = candles;
document.getElementById("volume").innerHTML = bars;
```
